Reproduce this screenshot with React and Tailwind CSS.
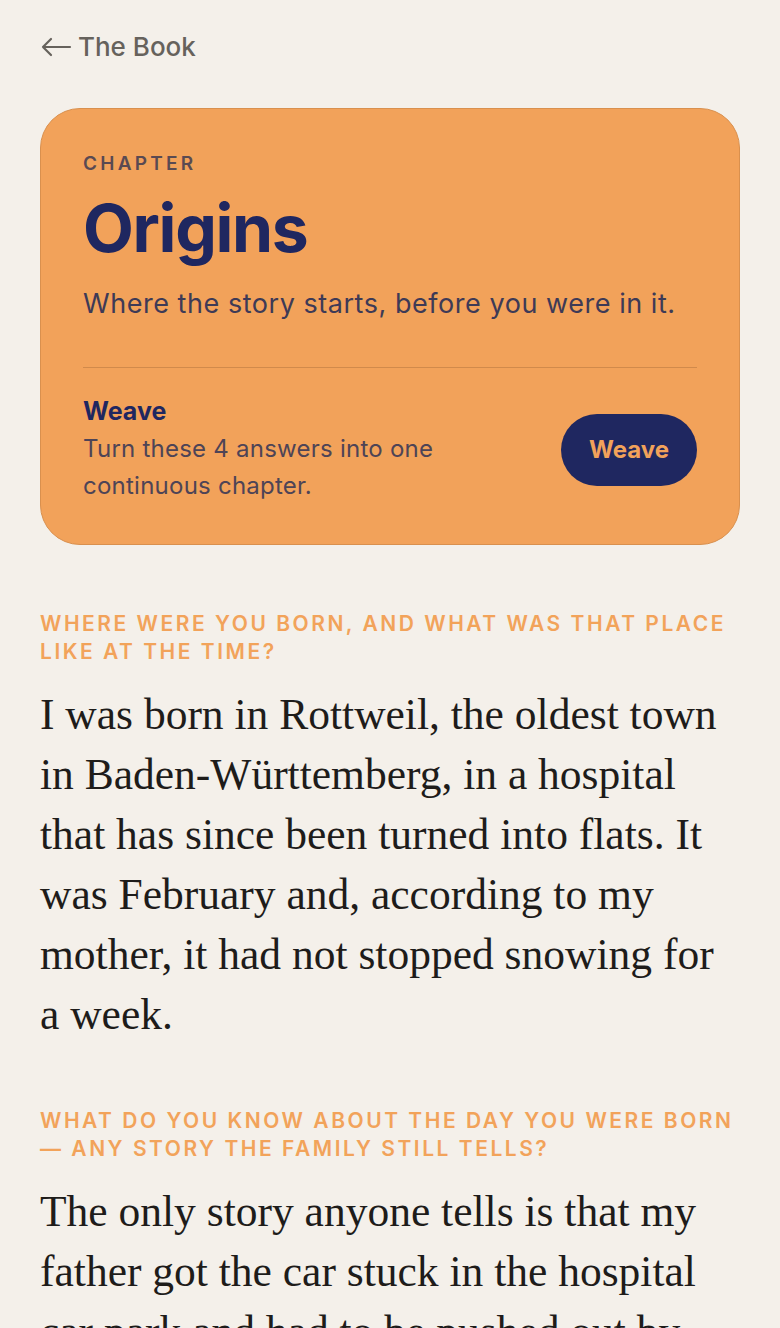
const serif = { fontFamily: "'Liberation Serif', 'DejaVu Serif', serif" };

function Answer({ lines, className = "" }) {
  return (
    <p className={"text-[43.5px] leading-[60px] text-[#1E1C1A] " + className} style={serif}>
      {lines.map((l, i) => (
        <span key={i} className="block whitespace-nowrap">{l}</span>
      ))}
    </p>
  );
}

function Question({ lines, className = "" }) {
  return (
    <div className={"text-[21px] leading-[28px] tracking-[0.12em] font-semibold text-[#F2A35A] uppercase " + className}>
      {lines.map((l, i) => (
        <span key={i} className="block whitespace-nowrap">{l}</span>
      ))}
    </div>
  );
}

export default function App() {
  const sans = { fontFamily: "Inter, Lato, 'Noto Sans', sans-serif" };
  return (
    <div className="h-[1328px] bg-[#F4F0EA] px-10 pt-[30px] overflow-hidden" style={sans}>
      <div className="flex items-center gap-[6px] text-[26px] leading-[34px] text-[#66625C] font-medium">
        <svg width="32" height="20" viewBox="0 0 32 20" fill="none" stroke="#66625C" strokeWidth="2.2" strokeLinecap="round" strokeLinejoin="round">
          <path d="M30 10H3M11 2L3 10l8 8" />
        </svg>
        <span>The Book</span>
      </div>

      <div className="mt-[44px] rounded-[40px] bg-[#F2A25A] border border-[#D9904E] px-[42px] pt-[43px] pb-[40px]">
        <div className="text-[19px] leading-[24px] tracking-[0.17em] font-semibold text-[#5A4A52]">CHAPTER</div>
        <div className="mt-[16px] text-[66px] leading-[72px] font-bold text-[#1F2760] tracking-[-0.02em]">Origins</div>
        <div className="mt-[22px] text-[27px] leading-[36px] tracking-[0.02em] text-[#3E3A56]">Where the story starts, before you were in it.</div>
        <div className="mt-[45px] h-px bg-[#D18A4B]" />
        <div className="mt-[27px] flex items-center justify-between">
          <div>
            <div className="text-[25px] leading-[32px] font-bold text-[#1F2760]">Weave</div>
            <div className="mt-[3px] text-[24px] leading-[37px] tracking-[0.01em] text-[#4E4456]">
              <span className="block">Turn these 4 answers into one</span>
              <span className="block">continuous chapter.</span>
            </div>
          </div>
          <button className="h-[72px] w-[136px] rounded-full bg-[#1F2760] text-[#F2A25A] text-[24px] font-bold">Weave</button>
        </div>
      </div>

      <Question
        className="mt-[65px]"
        lines={["Where were you born, and what was that place", "like at the time?"]}
      />
      <Answer
        className="mt-[18px]"
        lines={[
          "I was born in Rottweil, the oldest town",
          "in Baden-Württemberg, in a hospital",
          "that has since been turned into flats. It",
          "was February and, according to my",
          "mother, it had not stopped snowing for",
          "a week.",
        ]}
      />

      <Question
        className="mt-[63px]"
        lines={["What do you know about the day you were born", "— any story the family still tells?"]}
      />
      <Answer
        className="mt-[18px]"
        lines={[
          "The only story anyone tells is that my",
          "father got the car stuck in the hospital",
          "car park and had to be pushed out by",
        ]}
      />
    </div>
  );
}
